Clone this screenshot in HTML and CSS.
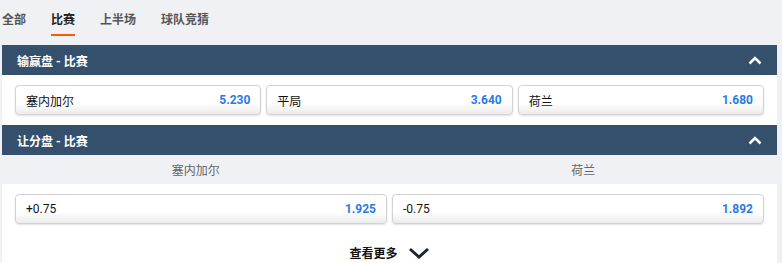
FILE: index.html
```html
<!DOCTYPE html>
<html lang="zh">
<head>
    <meta charset="UTF-8">
    <meta name="viewport" content="width=device-width, initial-scale=1.0">
    <title>比赛</title>
    <link rel="stylesheet" href="styles.css">
</head>
<body>

    <div class="tabs">
        <span class="tab">全部</span>
        <span class="tab active">比赛</span>
        <span class="tab">上半场</span>
        <span class="tab">球队竞猜</span>
    </div>

    <div class="market">
        <div class="market-head">
            <span>输赢盘 - 比赛</span>
            <svg class="chev" width="14" height="9" viewBox="0 0 14 9"><path d="M1.5 7.5 L7 2 L12.5 7.5" fill="none" stroke="#fff" stroke-width="2.6"/></svg>
        </div>
        <div class="odds-row three">
            <div class="odd"><span class="label">塞内加尔</span><span class="price">5.230</span></div>
            <div class="odd"><span class="label">平局</span><span class="price">3.640</span></div>
            <div class="odd"><span class="label">荷兰</span><span class="price">1.680</span></div>
        </div>
    </div>

    <div class="market">
        <div class="market-head">
            <span>让分盘 - 比赛</span>
            <svg class="chev" width="14" height="9" viewBox="0 0 14 9"><path d="M1.5 7.5 L7 2 L12.5 7.5" fill="none" stroke="#fff" stroke-width="2.6"/></svg>
        </div>
        <div class="sub-head">
            <span>塞内加尔</span>
            <span>荷兰</span>
        </div>
        <div class="odds-row two">
            <div class="odd"><span class="label">+0.75</span><span class="price">1.925</span></div>
            <div class="odd"><span class="label">-0.75</span><span class="price">1.892</span></div>
        </div>
        <div class="more">
            <span>查看更多</span>
            <svg width="22" height="12" viewBox="0 0 22 12"><path d="M2 2 L11 10 L20 2" fill="none" stroke="#1d2530" stroke-width="3"/></svg>
        </div>
    </div>

</body>
</html>
```

FILE: styles.css
```css
body {
    margin: 0;
    background-color: #f0f1f5;
    font-family: Roboto, "Noto Sans CJK SC", Arial, sans-serif;
    font-size: 12px;
    color: #222;
}

.tabs {
    display: flex;
    gap: 25px;
    height: 36px;
    padding-left: 2px;
    margin-bottom: 9px;
}

.tab {
    display: flex;
    align-items: center;
    font-weight: bold;
    color: #555;
    border-bottom: 2px solid transparent;
    padding-top: 2px;
}

.tab.active {
    color: #222;
    border-bottom-color: #ff5a00;
}

.market {
    margin: 0 5px 0 2px;
    background: white;
}

.market-head {
    display: flex;
    justify-content: space-between;
    align-items: center;
    height: 30px;
    padding: 0 15px;
    background: #34506d;
    color: white;
    font-weight: bold;
}

.sub-head {
    display: grid;
    grid-template-columns: 1fr 1fr;
    height: 29px;
    align-items: center;
    background: #f0f1f5;
    color: #666;
    text-align: center;
}

.odds-row {
    display: grid;
    gap: 5px;
    padding: 10px 13px;
}

.odds-row.three {
    grid-template-columns: repeat(3, 1fr);
}

.odds-row.two {
    grid-template-columns: 1fr 1fr;
}

.odd {
    display: flex;
    justify-content: space-between;
    align-items: center;
    height: 28px;
    padding: 0 10px;
    border: 1px solid #d2d2d2;
    border-radius: 4px;
    background: linear-gradient(to bottom, #fff 60%, #ececec 100%);
    box-shadow: 0 1px 2px rgba(0, 0, 0, 0.12);
}

.odd .label {
    color: #111;
}

.odd .price {
    color: #2a7ae4;
    font-weight: bold;
}

.more {
    display: flex;
    justify-content: center;
    align-items: center;
    gap: 10px;
    padding: 10px 0 10px 0;
    font-weight: bold;
    color: #111;
}
```
